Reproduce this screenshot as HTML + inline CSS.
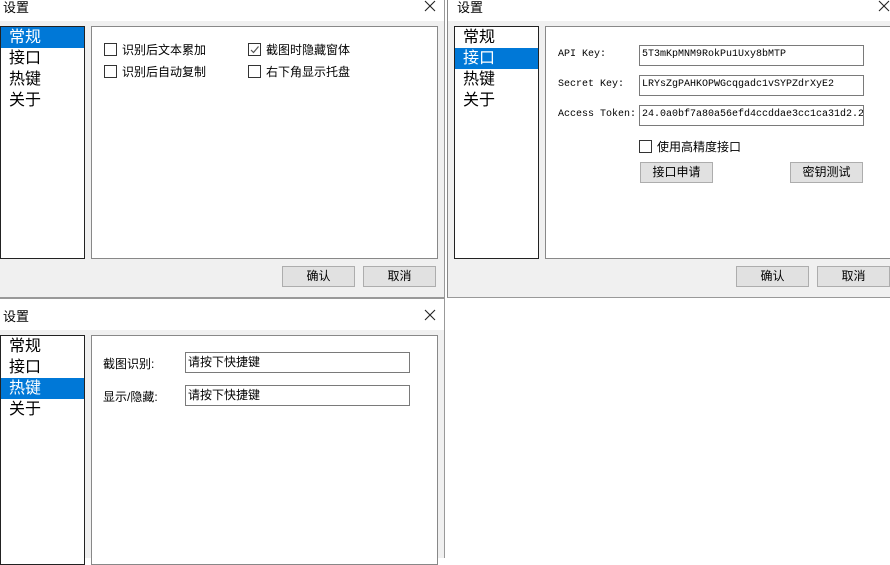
<html><head><style>
body{margin:0;width:890px;height:558px;background:#fff;position:relative;overflow:hidden;font-family:"Liberation Sans","Noto Sans CJK SC",sans-serif;font-size:12px;color:#000}
.a{position:absolute;box-sizing:border-box}
.win{background:#f0f0f0}
.tb{background:#fff}
.list{background:#fff;border:1px solid #222}
.list div{height:21px;line-height:21px;font-size:16px;padding-left:8px}
.sel{background:#0078d7;color:#fff}
.pan{background:#fff;border:1px solid #888}
.btn{background:#e1e1e1;border:1px solid #adadad;text-align:center;line-height:18px;font-size:12px}
.inp{background:#fff;border:1px solid #7a7a7a;padding-left:2px;line-height:18px;font-family:"Liberation Mono",monospace;font-size:10px;overflow:hidden;white-space:nowrap}
.cb{width:13px;height:13px;border:1px solid #333;background:#fff}
.lbl{font-family:"Liberation Mono",monospace;font-size:10px}
svg.x{position:absolute;width:12px;height:12px}
</style></head><body>
<!-- window 1 -->
<div class="a win" style="left:0;top:0;width:445px;height:298px;border-bottom:1px solid #999;border-right:1px solid #999"></div>
<div class="a tb" style="left:0;top:0;width:444px;height:21px"></div>
<div class="a" style="left:3px;top:-3px;font-size:13px">设置</div>
<svg class="x" style="left:424px;top:0" viewBox="0 0 12 12"><path d="M1 1L11 11M11 1L1 11" stroke="#222" stroke-width="1.1"/></svg>
<div class="a list" style="left:0;top:26px;width:85px;height:233px"><div class="sel">常规</div><div>接口</div><div>热键</div><div>关于</div></div>
<div class="a pan" style="left:91px;top:26px;width:347px;height:233px"></div>
<div class="a cb" style="left:104px;top:43px"></div><div class="a" style="left:122px;top:41px">识别后文本累加</div>
<div class="a cb" style="left:104px;top:65px"></div><div class="a" style="left:122px;top:63px">识别后自动复制</div>
<div class="a cb" style="left:248px;top:43px"><svg width="11" height="11" style="position:absolute;left:0;top:0"><path d="M2 6L4.5 8.5L9.5 2.5" stroke="#555" fill="none" stroke-width="1.2"/></svg></div><div class="a" style="left:266px;top:41px">截图时隐藏窗体</div>
<div class="a cb" style="left:248px;top:65px"></div><div class="a" style="left:266px;top:63px">右下角显示托盘</div>
<div class="a btn" style="left:282px;top:266px;width:73px;height:21px">确认</div>
<div class="a btn" style="left:363px;top:266px;width:73px;height:21px">取消</div>
<!-- window 2 -->
<div class="a win" style="left:447px;top:0;width:443px;height:298px;border-left:1px solid #888;border-bottom:1px solid #999"></div>
<div class="a tb" style="left:448px;top:0;width:442px;height:21px"></div>
<div class="a" style="left:457px;top:-3px;font-size:13px">设置</div>
<svg class="x" style="left:878px;top:0" viewBox="0 0 12 12"><path d="M1 1L11 11M11 1L1 11" stroke="#222" stroke-width="1.1"/></svg>
<div class="a list" style="left:454px;top:26px;width:85px;height:233px"><div>常规</div><div class="sel">接口</div><div>热键</div><div>关于</div></div>
<div class="a pan" style="left:545px;top:26px;width:346px;height:233px"></div>
<div class="a lbl" style="left:558px;top:49px">API Key:</div>
<div class="a lbl" style="left:558px;top:79px">Secret Key:</div>
<div class="a lbl" style="left:558px;top:109px">Access Token:</div>
<div class="a inp" style="left:639px;top:45px;width:225px;height:21px">5T3mKpMNM9RokPu1Uxy8bMTP</div>
<div class="a inp" style="left:639px;top:75px;width:225px;height:21px">LRYsZgPAHKOPWGcqgadc1vSYPZdrXyE2</div>
<div class="a inp" style="left:639px;top:105px;width:225px;height:21px">24.0a0bf7a80a56efd4ccddae3cc1ca31d2.2</div>
<div class="a cb" style="left:639px;top:140px"></div><div class="a" style="left:657px;top:138px">使用高精度接口</div>
<div class="a btn" style="left:640px;top:162px;width:73px;height:21px">接口申请</div>
<div class="a btn" style="left:790px;top:162px;width:73px;height:21px">密钥测试</div>
<div class="a btn" style="left:736px;top:266px;width:73px;height:21px">确认</div>
<div class="a btn" style="left:817px;top:266px;width:73px;height:21px">取消</div>
<!-- window 3 -->
<div class="a win" style="left:0;top:298px;width:445px;height:260px;border-right:1px solid #999;border-top:1px solid #999"></div>
<div class="a tb" style="left:0;top:299px;width:444px;height:31px"></div>
<div class="a" style="left:3px;top:306px;font-size:13px">设置</div>
<svg class="x" style="left:424px;top:309px" viewBox="0 0 12 12"><path d="M1 1L11 11M11 1L1 11" stroke="#222" stroke-width="1.1"/></svg>
<div class="a list" style="left:0;top:335px;width:85px;height:230px"><div>常规</div><div>接口</div><div class="sel">热键</div><div>关于</div></div>
<div class="a pan" style="left:91px;top:335px;width:347px;height:230px"></div>
<div class="a" style="left:103px;top:355px">截图识别:</div>
<div class="a" style="left:103px;top:388px">显示/隐藏:</div>
<div class="a inp" style="left:185px;top:352px;width:225px;height:21px;font-family:'Liberation Sans','Noto Sans CJK SC',sans-serif;font-size:12px">请按下快捷键</div>
<div class="a inp" style="left:185px;top:385px;width:225px;height:21px;font-family:'Liberation Sans','Noto Sans CJK SC',sans-serif;font-size:12px">请按下快捷键</div>
</body></html>
